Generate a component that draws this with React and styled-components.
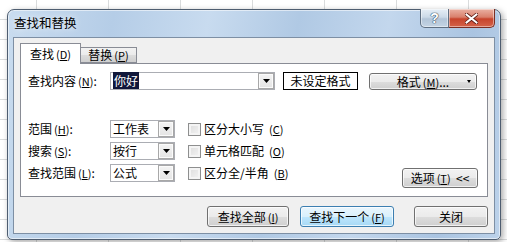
import React from "react";
import styled, { createGlobalStyle } from "styled-components";

const GlobalStyle = createGlobalStyle`
  html, body {
    margin: 0;
    padding: 0;
    background: #ffffff;
  }
  body {
    font-family: "Noto Sans CJK SC", "Liberation Sans", sans-serif;
    font-size: 12px;
    color: #000;
  }
`;

const Sheet = styled.div`
  position: relative;
  width: 507px;
  height: 242px;
  overflow: hidden;
  background-color: #fff;
  background-image:
    repeating-linear-gradient(to right, transparent 0 36px, #dadcdd 36px 37px, transparent 37px 72px),
    repeating-linear-gradient(to bottom, transparent 0 19px, #dadcdd 19px 20px);
`;

const Window = styled.div`
  position: absolute;
  left: 7px;
  top: 9px;
  width: 494px;
  height: 231px;
  box-sizing: border-box;
  border: 1px solid #4e5d70;
  border-radius: 7px 7px 5px 5px;
  padding: 0 5px 5px 5px;
  display: flex;
  flex-direction: column;
  background: linear-gradient(
    100deg,
    #c9dcef 0%,
    #b5cde7 20%,
    #c8dbef 38%,
    #b0c9e4 55%,
    #c3d7ed 72%,
    #aac4e1 88%,
    #bcd2ea 100%
  );
  box-shadow: inset 0 0 0 1px rgba(255, 255, 255, 0.55), 2px 2px 6px rgba(0, 0, 0, 0.35);
`;

const TitleBar = styled.div`
  height: 27px;
  display: flex;
  align-items: flex-start;
`;

const Title = styled.div`
  margin: 5px 0 0 1px;
  font-size: 12.5px;
  line-height: 15px;
  color: #000;
  text-shadow: 0 0 6px rgba(255, 255, 255, 0.9);
`;

const Caption = styled.div`
  margin: -1px 0 0 auto;
  display: flex;
`;

const CaptionButton = styled.div`
  height: 19px;
  width: ${(p) => (p.$close ? "46px" : "29px")};
  box-sizing: border-box;
  border: 1px solid ${(p) => (p.$close ? "#7b2f24" : "#5f6f82")};
  border-top: none;
  border-left: ${(p) => (p.$close ? "none" : undefined)};
  border-radius: ${(p) => (p.$close ? "0 0 5px 0" : "0 0 0 5px")};
  background: ${(p) =>
    p.$close
      ? "linear-gradient(to bottom, #eab1a3 0%, #d9806c 45%, #c7442c 55%, #d4634a 100%)"
      : "linear-gradient(to bottom, #e6eef6 0%, #ccdae8 45%, #b3c5d8 55%, #c4d4e4 100%)"};
  box-shadow: inset 0 0 0 1px rgba(255, 255, 255, 0.45);
  display: flex;
  align-items: center;
  justify-content: center;
`;

const HelpMark = styled.span`
  font-family: "Liberation Sans", sans-serif;
  font-weight: bold;
  font-size: 14px;
  line-height: 14px;
  color: #fff;
  text-shadow: 0 0 1px #33475c, 0 0 1px #33475c, 0 0 1px #33475c;
`;

const Client = styled.div`
  flex: 1;
  box-sizing: border-box;
  border: 1px solid #7d8fa4;
  background: #f0f0f0;
  padding: 6px 6px 0 6px;
  display: flex;
  flex-direction: column;
`;

const TabStrip = styled.div`
  height: 20px;
  display: flex;
  align-items: flex-end;
  margin-bottom: -1px;
  position: relative;
  z-index: 1;
`;

const Tab = styled.div`
  box-sizing: border-box;
  height: ${(p) => (p.$active ? "21px" : "16px")};
  width: ${(p) => (p.$active ? "61px" : "56px")};
  margin-bottom: ${(p) => (p.$active ? "0" : "1px")};
  border: 1px solid #898c95;
  border-bottom: ${(p) => (p.$active ? "none" : "1px solid #898c95")};
  border-left: ${(p) => (p.$active ? "1px solid #898c95" : "none")};
  background: ${(p) =>
    p.$active ? "#fff" : "linear-gradient(to bottom, #f2f2f2 0%, #ebebeb 50%, #dddddd 51%, #cfcfcf 100%)"};
  display: flex;
  align-items: ${(p) => (p.$active ? "flex-start" : "center")};
  padding-top: ${(p) => (p.$active ? "3px" : "0")};
  justify-content: center;
  line-height: 14px;
`;

const Panel = styled.div`
  box-sizing: border-box;
  height: 134px;
  border: 1px solid #898c95;
  background: #fff;
  padding: 8px 9px 0 7px;
  display: flex;
  flex-direction: column;
`;

const Row = styled.div`
  display: flex;
  align-items: flex-start;
`;

const Label = styled.div`
  width: 82px;
  height: 18px;
  line-height: 18px;
  white-space: nowrap;
`;

const Key = styled.span`
  font-size: 11px;
  margin-left: 2px;
  & u {
    text-underline-offset: 1px;
  }
`;

const Combo = styled.div`
  box-sizing: border-box;
  width: ${(p) => p.$w}px;
  height: 18px;
  border: 1px solid #abadb3;
  background: #fff;
  display: flex;
  align-items: center;
  padding-left: 2px;
`;

const ComboText = styled.span`
  flex: 1;
  line-height: 14px;
  white-space: nowrap;
`;

const Selected = styled.span`
  background: #10173a;
  color: #fff;
  padding: 0 1px;
`;

const DropButton = styled.div`
  box-sizing: border-box;
  width: 16px;
  height: 16px;
  border: 1px solid #a8a8a8;
  background: linear-gradient(to bottom, #f4f4f4 0%, #e4e4e4 100%);
  box-shadow: inset 0 0 0 1px #fbfbfb;
  display: flex;
  align-items: center;
  justify-content: center;
`;

const Arrow = () => (
  <svg width="7" height="4" viewBox="0 0 7 4">
    <path d="M0 0H7L3.5 4Z" fill="#000" />
  </svg>
);

const Status = styled.div`
  box-sizing: border-box;
  width: 75px;
  height: 18px;
  margin-left: 8px;
  border: 1px solid #000;
  background: #fff;
  text-align: center;
  line-height: 16px;
`;

const Button = styled.div`
  box-sizing: border-box;
  width: ${(p) => p.$w}px;
  height: ${(p) => p.$h || 21}px;
  margin-left: ${(p) => (p.$ml === "auto" ? "auto" : `${p.$ml || 0}px`)};
  margin-top: ${(p) => p.$mt || 0}px;
  border: 1px solid ${(p) => (p.$default ? "#3c7fb1" : "#707070")};
  border-radius: 3px;
  background: ${(p) =>
    p.$default
      ? "linear-gradient(to bottom, #eaf6fd 0%, #d9f0fc 50%, #bee6fd 51%, #a7d9f5 100%)"
      : "linear-gradient(to bottom, #f2f2f2 0%, #ebebeb 50%, #dddddd 51%, #cfcfcf 100%)"};
  box-shadow: inset 0 0 0 1px rgba(255, 255, 255, 0.7);
  display: flex;
  align-items: center;
  justify-content: center;
  position: relative;
  line-height: 14px;
  white-space: nowrap;
`;

const SmallArrow = styled.span`
  position: absolute;
  right: 5px;
  top: 6px;
  width: 0;
  height: 0;
  border-left: 2px solid transparent;
  border-right: 2px solid transparent;
  border-top: 3px solid #000;
`;

const Lower = styled.div`
  display: flex;
  align-items: flex-start;
  margin-top: 30px;
`;

const Stack = styled.div`
  display: flex;
  flex-direction: column;
  gap: 4px;
  margin-left: ${(p) => p.$ml || 0}px;
`;

const CheckRow = styled.div`
  height: 18px;
  display: flex;
  align-items: center;
  gap: 3px;
  white-space: nowrap;
  line-height: 14px;
`;

const Box = styled.span`
  box-sizing: border-box;
  width: 13px;
  height: 13px;
  border: 1px solid #8e8f8f;
  background: linear-gradient(135deg, #dcdcdc 0%, #f4f4f4 100%);
  box-shadow: inset 0 0 0 2px #f4f4f4;
`;

const Footer = styled.div`
  display: flex;
  justify-content: flex-end;
  margin-top: 9px;
`;

const K = ({ c }) => (
  <Key>
    (<u>{c}</u>)
  </Key>
);

export default function App() {
  return (
    <>
      <GlobalStyle />
      <Sheet>
        <Window>
          <TitleBar>
            <Title>查找和替换</Title>
            <Caption>
              <CaptionButton>
                <HelpMark>?</HelpMark>
              </CaptionButton>
              <CaptionButton $close>
                <svg width="13" height="11" viewBox="0 0 13 11">
                  <path
                    d="M1.5 1.5L11.5 9.5M11.5 1.5L1.5 9.5"
                    stroke="#5a1a12"
                    strokeWidth="3.6"
                    strokeLinecap="square"
                  />
                  <path
                    d="M1.5 1.5L11.5 9.5M11.5 1.5L1.5 9.5"
                    stroke="#fff"
                    strokeWidth="2"
                    strokeLinecap="square"
                  />
                </svg>
              </CaptionButton>
            </Caption>
          </TitleBar>
          <Client>
            <TabStrip>
              <Tab $active>
                查找<K c="D" />
              </Tab>
              <Tab>
                替换<K c="P" />
              </Tab>
            </TabStrip>
            <Panel>
              <Row>
                <Label>
                  查找内容<K c="N" />:
                </Label>
                <Combo $w={165}>
                  <ComboText>
                    <Selected>你好</Selected>
                  </ComboText>
                  <DropButton>
                    <Arrow />
                  </DropButton>
                </Combo>
                <Status>未设定格式</Status>
                <Button $w={108} $h={17} $ml={11} $mt={1}>
                  格式<K c="M" />...
                  <SmallArrow />
                </Button>
              </Row>
              <Lower>
                <Stack>
                  <Label>
                    范围<K c="H" />:
                  </Label>
                  <Label>
                    搜索<K c="S" />:
                  </Label>
                  <Label>
                    查找范围<K c="L" />:
                  </Label>
                </Stack>
                <Stack>
                  {["工作表", "按行", "公式"].map((t) => (
                    <Combo $w={65} key={t}>
                      <ComboText>{t}</ComboText>
                      <DropButton>
                        <Arrow />
                      </DropButton>
                    </Combo>
                  ))}
                </Stack>
                <Stack $ml={13}>
                  <CheckRow>
                    <Box />
                    区分大小写<K c="C" />
                  </CheckRow>
                  <CheckRow>
                    <Box />
                    单元格匹配<K c="O" />
                  </CheckRow>
                  <CheckRow>
                    <Box />
                    区分全/半角<K c="B" />
                  </CheckRow>
                </Stack>
                <Button $w={76} $h={20} $ml="auto" $mt={48}>
                  选项<K c="T" />&nbsp;&nbsp;&lt;&lt;
                </Button>
              </Lower>
            </Panel>
            <Footer>
              <Button $w={82}>
                查找全部<K c="I" />
              </Button>
              <Button $w={94} $ml={11} $default>
                查找下一个<K c="F" />
              </Button>
              <Button $w={74} $ml={20}>
                关闭
              </Button>
            </Footer>
          </Client>
        </Window>
      </Sheet>
    </>
  );
}
